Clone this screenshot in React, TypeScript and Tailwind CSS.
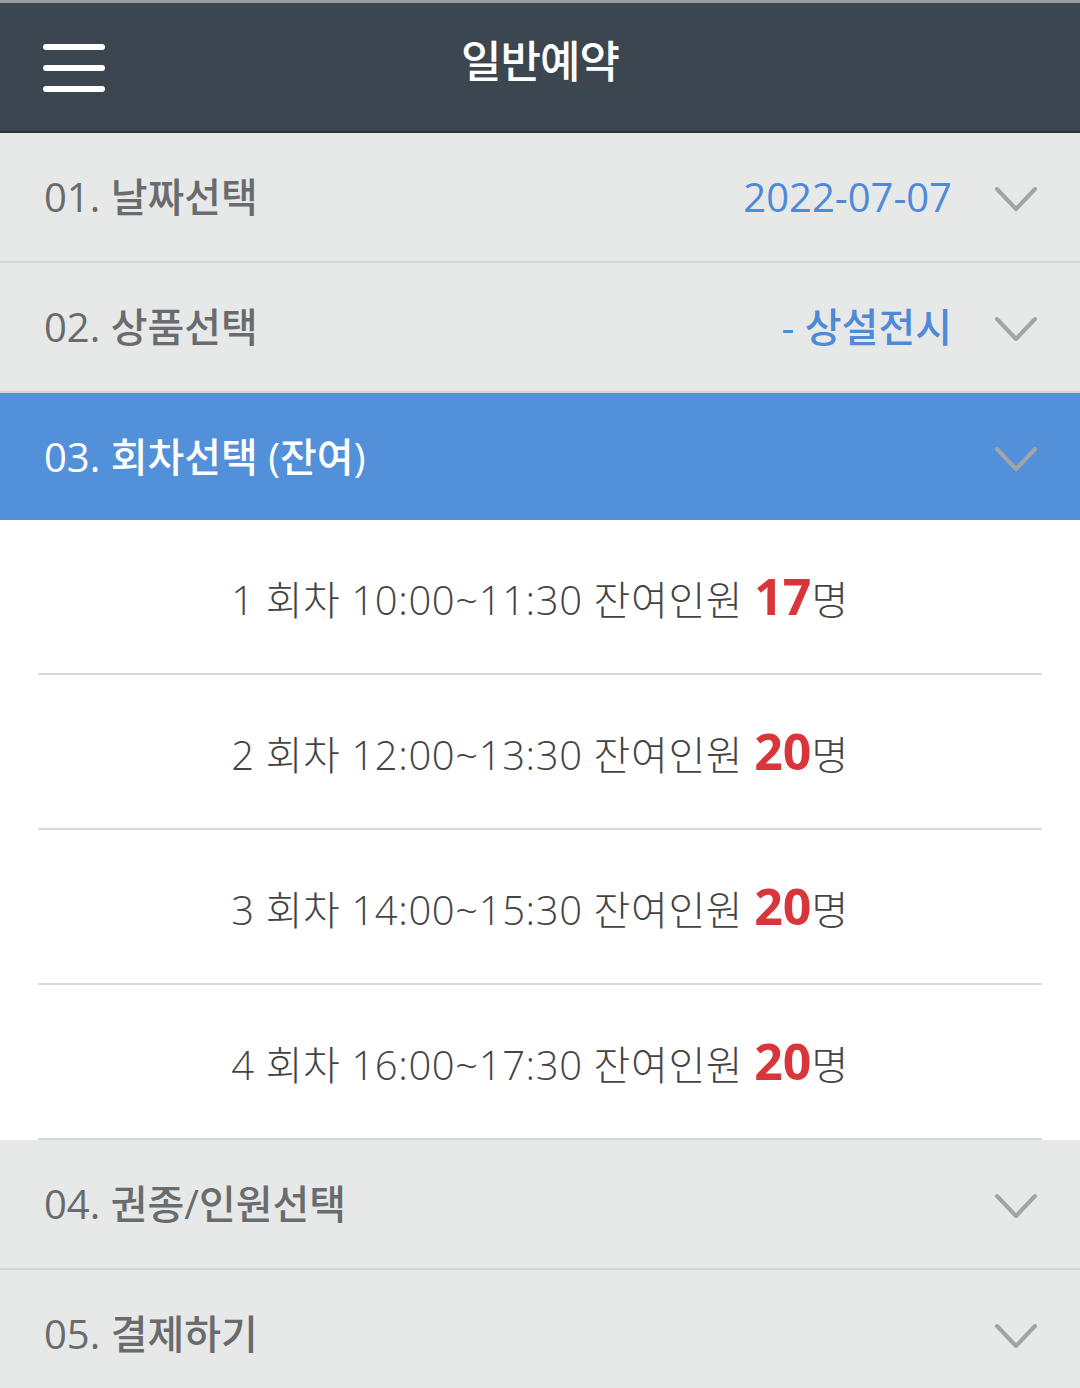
import React from 'react';

const FONT = { fontFamily: '"Open Sans", "Noto Sans CJK KR", sans-serif' };
const KR = { fontFamily: '"Noto Sans CJK KR", sans-serif' };

interface Step {
  no: string;
  label: string;
  value?: string;
  active?: boolean;
}

const SLOTS = [
  { n: 1, time: '10:00~11:30', left: 17 },
  { n: 2, time: '12:00~13:30', left: 20 },
  { n: 3, time: '14:00~15:30', left: 20 },
  { n: 4, time: '16:00~17:30', left: 20 },
];

function Chevron() {
  return (
    <svg width="44" height="28" viewBox="0 0 44 28" className="mt-[4px] shrink-0">
      <path d="M3 4 L22 24 L41 4" fill="none" stroke="#a2a5a8" strokeWidth="4" strokeLinecap="round" strokeLinejoin="round" />
    </svg>
  );
}

function StepRow({ no, label, value, active }: Step) {
  return (
    <div
      className={
        active
          ? 'flex h-[127px] items-center bg-[#5290da] pl-[44px] pr-[42px]'
          : 'flex h-[130px] items-center border-b-2 border-[#d3d5d5] bg-[#e7e8e8] pl-[44px] pr-[42px]'
      }
    >
      <span className={active ? 'flex-1 text-[40px] font-medium text-white' : 'flex-1 text-[40px] font-medium text-[#696b6d]'}>
        {no}. {label}
      </span>
      {value && <span className="mr-[42px] text-[40px] font-medium text-[#4f8ad6]">{value}</span>}
      <Chevron />
    </div>
  );
}

export default function App() {
  return (
    <div className="min-h-[1388px] w-[1080px] bg-white" style={FONT}>
      <div className="h-[3px] bg-[#9a9c9e]" />
      <div className="relative flex h-[130px] items-center justify-center border-b-2 border-[#2e353d] bg-[#3c4651] pb-[16px]">
        <div className="absolute left-[43px] top-[41px] flex flex-col gap-[15px]">
          <span className="block h-[6px] w-[62px] rounded-full bg-white" />
          <span className="block h-[6px] w-[62px] rounded-full bg-white" />
          <span className="block h-[6px] w-[62px] rounded-full bg-white" />
        </div>
        <h1 className="text-[44px] font-medium tracking-[-1px] text-white" style={KR}>
          일반예약
        </h1>
      </div>

      <StepRow no="01" label="날짜선택" value="2022-07-07" />
      <StepRow no="02" label="상품선택" value="- 상설전시" />
      <StepRow no="03" label="회차선택 (잔여)" active />

      <div className="flex flex-col">
        {SLOTS.map((s) => (
          <div key={s.n} className="mx-[38px] flex h-[155px] items-center justify-center border-b-2 border-[#d6d7d7]">
            <span className="text-[40px] font-light tracking-[0.6px] text-[#444]">
              {s.n} 회차 {s.time} 잔여인원{' '}
              <span className="text-[50px] font-bold tracking-normal text-[#d8363a]">{s.left}</span>명
            </span>
          </div>
        ))}
      </div>

      <StepRow no="04" label="권종/인원선택" />
      <StepRow no="05" label="결제하기" />
    </div>
  );
}
